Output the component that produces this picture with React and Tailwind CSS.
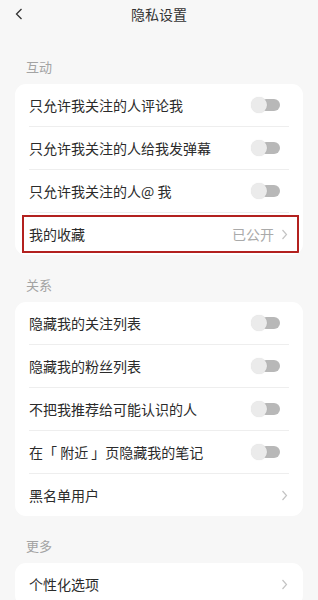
import React from "react";

const font = { fontFamily: "'Noto Sans CJK SC', 'Noto Sans', sans-serif" };

function Toggle() {
  return (
    <div className="relative mr-[9px] h-[16px] w-[29px] shrink-0">
      <div className="absolute right-0 top-[2px] h-[12px] w-[20px] rounded-full bg-[#b8b8b8]" />
      <div className="absolute left-0 top-0 h-[16px] w-[16px] rounded-full bg-[#ebebeb] shadow-[0_0_1px_rgba(0,0,0,0.15)]" />
    </div>
  );
}

function Chevron() {
  return (
    <svg width="7" height="11" viewBox="0 0 7 11" className="mr-[1px] shrink-0">
      <path d="M1.5 1 L5.5 5.5 L1.5 10" fill="none" stroke="#c4c4c4" strokeWidth="1.2" />
    </svg>
  );
}

function Row({ label, right, last, highlight }) {
  return (
    <div className="relative px-[14px]">
      <div
        className={`flex items-center justify-between ${
          last ? "h-[42px]" : "h-[43px] border-b border-[#eeeeee]"
        }`}
      >
        <span className="text-[14px] leading-none text-[#2b2b2b]">{label}</span>
        <div className="flex items-center">{right}</div>
      </div>
      {highlight && (
        <div className="pointer-events-none absolute bottom-[2px] left-[7px] right-[4px] top-[2px] border-[2.5px] border-[#b3211f]" />
      )}
    </div>
  );
}

function Section({ title, first, children }) {
  return (
    <div>
      <div
        className={`px-[26px] text-[13px] leading-[17px] text-[#a3a3a3] ${
          first ? "pb-[9px] pt-[30px]" : "pb-[9px] pt-[21px]"
        }`}
      >
        {title}
      </div>
      <div className="mx-[15px] overflow-hidden rounded-[11px] bg-white">{children}</div>
    </div>
  );
}

export default function App() {
  const toggle = <Toggle />;
  const link = <Chevron />;
  return (
    <div className="h-[600px] w-[318px] overflow-hidden bg-[#f7f7f7]" style={font}>
      <div className="relative flex h-[28px] items-center justify-center">
        <svg width="8" height="12" viewBox="0 0 8 12" className="absolute left-[15px] top-[8px]">
          <path d="M6.5 1 L1.5 6 L6.5 11" fill="none" stroke="#333" strokeWidth="1.3" />
        </svg>
        <span className="text-[14px] leading-none text-[#333]">隐私设置</span>
      </div>

      <Section title="互动" first>
        <Row label="只允许我关注的人评论我" right={toggle} />
        <Row label="只允许我关注的人给我发弹幕" right={toggle} />
        <Row label="只允许我关注的人@ 我" right={toggle} />
        <Row
          label="我的收藏"
          last
          highlight
          right={
            <>
              <span className="mr-[7px] text-[14px] leading-none text-[#aaaaaa]">已公开</span>
              {link}
            </>
          }
        />
      </Section>

      <Section title="关系">
        <Row label="隐藏我的关注列表" right={toggle} />
        <Row label="隐藏我的粉丝列表" right={toggle} />
        <Row label="不把我推荐给可能认识的人" right={toggle} />
        <Row label="在「 附近 」页隐藏我的笔记" right={toggle} />
        <Row label="黑名单用户" last right={link} />
      </Section>

      <Section title="更多">
        <Row label="个性化选项" right={link} />
      </Section>
    </div>
  );
}
